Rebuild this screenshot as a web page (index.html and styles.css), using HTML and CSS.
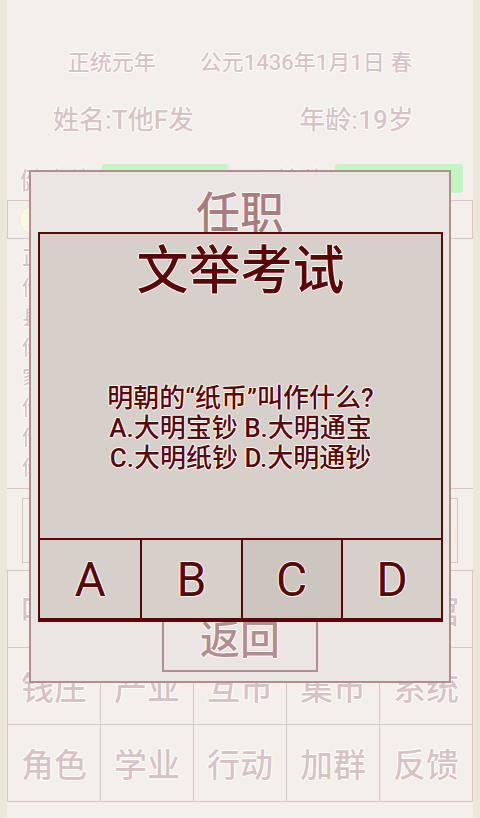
FILE: index.html
```html
<!DOCTYPE html>
<html lang="zh-CN">
<head>
  <meta charset="UTF-8" />
  <meta name="viewport" content="width=device-width, initial-scale=1.0"/>
  <title>大明人生</title>
  <link rel="stylesheet" href="styles.css">
</head>
<body>

<div class="game">
  <div class="date-row">
    <span>正统元年</span>
    <span>公元1436年1月1日 春</span>
  </div>

  <div class="info-row">
    <span>姓名:T他F发</span>
    <span>年龄:19岁</span>
  </div>

  <div class="stat-row">
    <div class="stat">
      <span class="stat-label">健康值</span>
      <div class="bar"><div class="bar-fill" style="width:98%"></div></div>
    </div>
    <div class="stat">
      <span class="stat-label">心情值</span>
      <div class="bar"><div class="bar-fill" style="width:100%"></div></div>
    </div>
  </div>

  <div class="money-row">
    <span class="coin"></span>
    <span class="money">铜钱:1200文</span>
  </div>

  <div class="log">
    <p>正统元年1月1日：你年满十九岁。</p>
    <p>你在私塾中苦读四书五经。</p>
    <p>县试放榜，你名列前茅。</p>
    <p>你去集市买了一匹布。</p>
    <p>家中来信，父母安好。</p>
    <p>你参加了府试。</p>
    <p>你在钱庄存了些银两。</p>
    <p>你听说朝廷开科取士。</p>
  </div>

  <div class="input-row">
    <div class="input-box"></div>
  </div>

  <div class="menu">
    <a>吃喝</a><a>仕途</a><a>任职</a><a>科举</a><a>会馆</a>
    <a>钱庄</a><a>产业</a><a>互市</a><a>集市</a><a>系统</a>
    <a>角色</a><a>学业</a><a>行动</a><a>加群</a><a>反馈</a>
  </div>
</div>

<div class="mask"></div>

<div class="dialog office">
  <h2 class="office-title">任职</h2>
  <div class="office-list"></div>
  <button class="back-btn">返回</button>
</div>

<div class="mask"></div>

<div class="dialog exam">
  <h2 class="exam-title">文举考试</h2>
  <div class="question">
    <p>明朝的“纸币”叫作什么?<br/>A.大明宝钞 B.大明通宝<br/>C.大明纸钞 D.大明通钞</p>
  </div>
  <div class="answers">
    <button>A</button>
    <button>B</button>
    <button class="picked">C</button>
    <button>D</button>
  </div>
</div>

</body>
</html>
```

FILE: styles.css
```css
body { margin: 0; background: #bba47e; font-family: Roboto, "Noto Sans CJK SC", sans-serif; font-weight: 500; color: #6e2529; }
p, h2 { margin: 0; }

.game { margin: 0 7px; height: 818px; background: #d3c8b5; display: flex; flex-direction: column; overflow: hidden; }
.game span, .game a, .game p { text-shadow: -1px 0 #fff, 1px 0 #fff, 0 -1px #fff, 0 1px #fff; }

.date-row { display: flex; justify-content: center; gap: 44px; padding-top: 48px; font-size: 22px; line-height: 30px; }
.info-row { display: grid; grid-template-columns: 1fr 1fr; text-align: center; margin-top: 25px; font-size: 26px; line-height: 34px; }

.stat-row { display: grid; grid-template-columns: 1fr 1fr; margin-top: 24px; height: 29px; }
.stat { display: flex; align-items: center; gap: 10px; padding: 0 10px 0 13px; }
.stat-label { font-size: 24px; width: 72px; flex: none; }
.bar { flex: 1; height: 29px; background: #b9b0a6; border-radius: 3px; overflow: hidden; }
.bar-fill { height: 100%; background: #1ed81e; }

.money-row { margin-top: 10px; height: 39px; border: 1px solid #7a2a2e; display: flex; align-items: center; gap: 10px; padding-left: 11px; box-sizing: border-box; }
.coin { width: 30px; height: 30px; border-radius: 50%; background: #ece890; border: 1px solid #a8a070; box-sizing: border-box; }
.money { font-size: 20px; }

.log { height: 250px; padding: 4px 0 0 15px; box-sizing: border-box; border-bottom: 1px solid #7a2a2e; font-size: 20px; line-height: 30px; }

.input-row { margin-top: 9px; padding: 0 15px; }
.input-box { height: 65px; border: 1px solid #7a2a2e; box-sizing: border-box; }

.menu { margin-top: 7px; display: grid; grid-template-columns: repeat(5, 1fr); grid-template-rows: repeat(3, 77px); border: 1px solid #7a2a2e; border-right: 0; border-bottom: 0; }
.menu a { display: flex; align-items: center; justify-content: center; font-size: 33px; border-right: 1px solid #7a2a2e; border-bottom: 1px solid #7a2a2e; cursor: pointer; }

.mask { position: fixed; inset: 0; background: rgba(255, 255, 255, 0.48); }

.dialog { position: absolute; box-sizing: border-box; display: flex; flex-direction: column; }
.dialog h2, .dialog p, .dialog button { text-shadow: -1px 0 #fff, 1px 0 #fff, 0 -1px #fff, 0 1px #fff; }

.office { left: 29px; top: 170px; width: 422px; height: 513px; background: #d8cfca; border: 2px solid #6e2529; align-items: center; }
.office-title { font-size: 44px; line-height: 50px; font-weight: 500; padding-top: 17px; color: #5a0707; }
.office-list { flex: 1; }
.back-btn { width: 156px; height: 70px; margin-bottom: 9px; background: transparent; border: 2px solid #6e2529; font-family: inherit; font-weight: 500; font-size: 40px; color: #6e2529; }

.exam { left: 38px; top: 232px; width: 405px; height: 390px; background: #d6cfca; border: 2px solid #5a0707; border-bottom-width: 4px; color: #5a0707; }
.exam-title { font-size: 52px; line-height: 60px; font-weight: 500; padding-top: 8px; text-align: center; }
.question { flex: 1; display: flex; align-items: center; justify-content: center; padding-top: 16px; text-align: center; font-size: 26px; line-height: 30px; }
.answers { display: grid; grid-template-columns: repeat(4, 1fr); height: 80px; border-top: 2px solid #5a0707; box-sizing: border-box; }
.answers button { background: transparent; border: 0; border-left: 2px solid #5a0707; font-family: inherit; font-weight: 400; font-size: 48px; color: #5a0707; cursor: pointer; }
.answers button:first-child { border-left: 0; }
.answers .picked { background: #cdc5bf; }
```
